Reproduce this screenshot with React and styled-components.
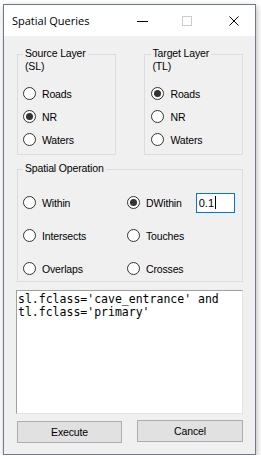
import React from "react";
import styled, { createGlobalStyle } from "styled-components";

const GlobalStyle = createGlobalStyle`
  html, body { margin: 0; padding: 0; background: #ffffff; }
  body { font-family: "Liberation Sans", Arial, sans-serif; }
`;

const Window = styled.div`
  box-sizing: border-box;
  margin: 4px 0 0 3px;
  width: 253px;
  height: 451px;
  border: 1px solid #6e7b8f;
  background: #f0f0f0;
  display: flex;
  flex-direction: column;
  box-shadow: 1px 2px 6px rgba(0, 0, 0, 0.28);
`;

const TitleBar = styled.div`
  height: 31px;
  flex: none;
  background: #ffffff;
  display: flex;
  align-items: center;
  padding: 0 16px 0 8px;
`;

const Title = styled.div`
  font-family: "Open Sans", "Noto Sans", sans-serif;
  font-size: 11px;
  color: #000;
  flex: 1;
`;

const TitleIcon = styled.svg`
  display: block;
  flex: none;
  margin-left: ${(p) => p.$gap}px;
`;

const Content = styled.div`
  display: flex;
  flex-direction: column;
  padding: 0 12px;
`;

const TopRow = styled.div`
  display: flex;
  margin-top: 18px;
`;

const Group = styled.div`
  box-sizing: border-box;
  border: 1px solid #dcdcdc;
  width: ${(p) => p.$w}px;
  height: ${(p) => p.$h}px;
  margin-left: ${(p) => p.$ml || 0}px;
  margin-top: ${(p) => p.$mt || 0}px;
  padding-left: ${(p) => p.$pl}px;
  display: flex;
  flex-direction: column;
`;

const Caption = styled.div`
  margin-top: -8px;
  width: fit-content;
  padding: 0 2px;
  background: #f0f0f0;
  font-size: 10.5px;
  letter-spacing: -0.15px;
  line-height: 13px;
  color: #000;
`;

const RadioList = styled.div`
  display: flex;
  flex-direction: column;
  margin-top: 9px;
`;

const RadioRow = styled.div`
  display: flex;
  align-items: center;
  gap: ${(p) => p.$gap || 6}px;
  height: 23px;
  font-size: 10.5px;
  letter-spacing: -0.15px;
  color: #000;
  white-space: nowrap;
`;

const RadioCircle = styled.span`
  box-sizing: border-box;
  width: 13px;
  height: 13px;
  border-radius: 50%;
  border: 1px solid #333333;
  background: #ffffff;
  display: flex;
  align-items: center;
  justify-content: center;
  flex: none;
  &::after {
    content: "";
    width: 7px;
    height: 7px;
    border-radius: 50%;
    background: #333333;
    display: ${(p) => (p.$checked ? "block" : "none")};
  }
`;

const OpGrid = styled.div`
  display: grid;
  grid-template-columns: 104px auto;
  grid-auto-rows: 23px;
  row-gap: 10px;
  margin-top: 16px;
`;

const ValueBox = styled.div`
  box-sizing: border-box;
  width: 39px;
  height: 20px;
  margin-left: 8px;
  border: 1px solid #0078d7;
  background: #ffffff;
  font-size: 11px;
  letter-spacing: 0;
  line-height: 18px;
  padding-left: 2px;
  display: flex;
  align-items: center;
`;

const Caret = styled.span`
  display: inline-block;
  width: 1px;
  height: 13px;
  background: #000;
  margin-left: 1px;
`;

const QueryText = styled.textarea`
  box-sizing: border-box;
  margin: 8px 0 0 0;
  width: 227px;
  height: 124px;
  resize: none;
  overflow: hidden;
  outline: none;
  border-style: solid;
  border-width: 1px;
  border-color: #a0a0a0 #e3e3e3 #e3e3e3 #a0a0a0;
  background: #ffffff;
  padding: 2px 1px;
  font-family: "DejaVu Sans Mono", "Liberation Mono", monospace;
  font-size: 11.5px;
  line-height: 13px;
  color: #000;
`;

const ButtonRow = styled.div`
  display: flex;
  align-items: flex-start;
  margin-top: 6px;
`;

const Button = styled.button`
  box-sizing: border-box;
  width: ${(p) => p.$w}px;
  height: 22px;
  margin-left: ${(p) => p.$ml}px;
  margin-top: ${(p) => p.$mt || 0}px;
  background: #e1e1e1;
  border: 1px solid #adadad;
  font-family: "Liberation Sans", Arial, sans-serif;
  font-size: 10.5px;
  letter-spacing: -0.15px;
  color: #000;
  padding: 0;
`;

function Radio({ label, checked, gap }) {
  return (
    <RadioRow $gap={gap}>
      <RadioCircle $checked={checked} />
      <span>{label}</span>
    </RadioRow>
  );
}

export default function App() {
  return (
    <>
      <GlobalStyle />
      <Window>
        <TitleBar>
          <Title>Spatial Queries</Title>
          <TitleIcon width="11" height="10" viewBox="0 0 11 10" $gap={0}>
            <line x1="0" y1="5.5" x2="11" y2="5.5" stroke="#000" strokeWidth="1" />
          </TitleIcon>
          <TitleIcon width="10" height="10" viewBox="0 0 10 10" $gap={34}>
            <rect x="0.5" y="0.5" width="9" height="9" fill="none" stroke="#cccccc" strokeWidth="1" />
          </TitleIcon>
          <TitleIcon width="10" height="10" viewBox="0 0 10 10" $gap={37}>
            <path d="M0.5 0.5 L9.5 9.5 M9.5 0.5 L0.5 9.5" stroke="#000" strokeWidth="1" />
          </TitleIcon>
        </TitleBar>
        <Content>
          <TopRow>
            <Group $w={99} $h={101} $ml={1} $pl={5}>
              <Caption>
                Source Layer
                <br />
                (SL)
              </Caption>
              <RadioList>
                <Radio label="Roads" />
                <Radio label="NR" checked />
                <Radio label="Waters" />
              </RadioList>
            </Group>
            <Group $w={100} $h={101} $ml={28} $pl={6}>
              <Caption>
                Target Layer
                <br />
                (TL)
              </Caption>
              <RadioList>
                <Radio label="Roads" checked gap={7} />
                <Radio label="NR" gap={7} />
                <Radio label="Waters" gap={7} />
              </RadioList>
            </Group>
          </TopRow>
          <Group $w={226} $h={113} $ml={1} $mt={14} $pl={5}>
            <Caption>Spatial Operation</Caption>
            <OpGrid>
              <Radio label="Within" />
              <RadioRow>
                <RadioCircle $checked />
                <span>DWithin</span>
                <ValueBox>
                  0.1
                  <Caret />
                </ValueBox>
              </RadioRow>
              <Radio label="Intersects" />
              <Radio label="Touches" />
              <Radio label="Overlaps" />
              <Radio label="Crosses" />
            </OpGrid>
          </Group>
          <QueryText
            readOnly
            spellCheck={false}
            value={"sl.fclass='cave_entrance' and tl.fclass='primary'"}
          />
          <ButtonRow>
            <Button $w={105} $ml={1} $mt={1}>Execute</Button>
            <Button $w={106} $ml={15}>Cancel</Button>
          </ButtonRow>
        </Content>
      </Window>
    </>
  );
}
